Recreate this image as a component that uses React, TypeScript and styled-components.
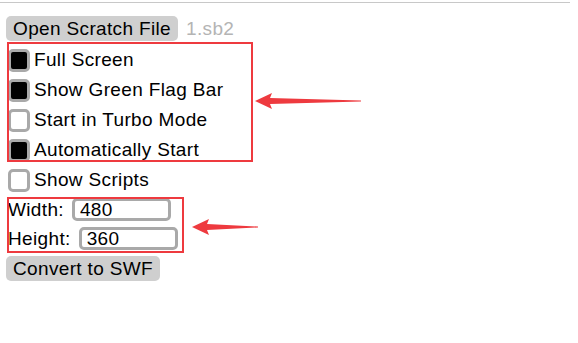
import React, { useState } from "react";
import styled, { createGlobalStyle } from "styled-components";

const GlobalStyle = createGlobalStyle`
  html, body {
    margin: 0;
    padding: 0;
    background: #fff;
  }
  body {
    font-family: "Liberation Sans", Arial, sans-serif;
    color: #000;
  }
`;

interface Option {
  id: string;
  label: string;
  checked: boolean;
}

const initialOptions: Option[] = [
  { id: "fullscreen", label: "Full Screen", checked: true },
  { id: "flagbar", label: "Show Green Flag Bar", checked: true },
  { id: "turbo", label: "Start in Turbo Mode", checked: false },
  { id: "autostart", label: "Automatically Start", checked: true },
];

const Arrow: React.FC<{ length: number }> = ({ length }) => (
  <svg width={length} height={18} viewBox={`0 0 ${length} 18`}>
    <path
      d={`M0 9 L17 1 L15 6 L${length} 8.5 L${length} 9.5 L15 12 L17 17 Z`}
      fill="#ee3a3f"
    />
  </svg>
);

export default function App() {
  const [options, setOptions] = useState(initialOptions);
  const [showScripts, setShowScripts] = useState(false);
  const [width, setWidth] = useState("480");
  const [height, setHeight] = useState("360");

  const toggle = (id: string) =>
    setOptions((prev) =>
      prev.map((o) => (o.id === id ? { ...o, checked: !o.checked } : o))
    );

  return (
    <>
      <GlobalStyle />
      <Ruler />
      <Page>
        <FileRow>
          <GrayButton>Open Scratch File</GrayButton>
          <FileName>1.sb2</FileName>
        </FileRow>

        <Annotated gap={4}>
          {options.map((o) => (
            <CheckRow key={o.id} onClick={() => toggle(o.id)}>
              <Box checked={o.checked} />
              <span>{o.label}</span>
            </CheckRow>
          ))}
          {/* red annotation frame + arrow */}
          <Frame style={{ top: -3, left: 1, width: 246, height: 120 }} />
          <ArrowHolder style={{ top: 47, left: 249 }}>
            <Arrow length={106} />
          </ArrowHolder>
        </Annotated>

        <CheckRow onClick={() => setShowScripts(!showScripts)}>
          <Box checked={showScripts} />
          <span>Show Scripts</span>
        </CheckRow>

        <Annotated gap={0}>
          <SizeRow>
            <SizeLabel>Width:</SizeLabel>
            <SizeInput
              value={width}
              onChange={(e) => setWidth(e.target.value)}
            />
          </SizeRow>
          <SizeRow>
            <SizeLabel>Height:</SizeLabel>
            <SizeInput
              value={height}
              onChange={(e) => setHeight(e.target.value)}
            />
          </SizeRow>
          <Frame style={{ top: 2, left: 1, width: 177, height: 56 }} />
          <ArrowHolder style={{ top: 23, left: 186 }}>
            <Arrow length={66} />
          </ArrowHolder>
        </Annotated>

        <ConvertButton>Convert to SWF</ConvertButton>
      </Page>
    </>
  );
}

const Ruler = styled.div`
  height: 2px;
  width: 570px;
  border-bottom: 1px solid #c8c8c8;
`;

const Page = styled.div`
  display: flex;
  flex-direction: column;
  align-items: flex-start;
  padding: 13px 0 0 6px;
  font-size: 19px;
  letter-spacing: 0.35px;
`;

const FileRow = styled.div`
  display: flex;
  align-items: center;
  gap: 8px;
`;

const GrayButton = styled.button`
  font-family: "Liberation Sans", Arial, sans-serif;
  font-size: 19px;
  letter-spacing: 0.35px;
  color: #000;
  background: #cfcfcf;
  border: none;
  border-radius: 5px;
  height: 25px;
  padding: 0 7px;
  line-height: 25px;
  cursor: pointer;
`;

const ConvertButton = styled(GrayButton)`
  margin-top: 3px;
`;

const FileName = styled.span`
  color: #b4b4b4;
`;

const Annotated = styled.div<{ gap: number }>`
  position: relative;
  display: flex;
  flex-direction: column;
  margin-top: ${(p) => p.gap}px;
`;

const Frame = styled.div`
  position: absolute;
  box-sizing: border-box;
  border: 2px solid #ee3a3f;
  pointer-events: none;
`;

const ArrowHolder = styled.div`
  position: absolute;
  line-height: 0;
  pointer-events: none;
`;

const CheckRow = styled.label`
  display: flex;
  align-items: center;
  gap: 4px;
  height: 30px;
  padding-left: 2px;
  cursor: pointer;
  user-select: none;
`;

const Box = styled.span<{ checked: boolean }>`
  box-sizing: border-box;
  width: 22px;
  height: 23px;
  border: 3px solid #a9a9a9;
  border-radius: 5px;
  background: ${(p) => (p.checked ? "#000" : "#fff")};
`;

const SizeRow = styled.div`
  display: flex;
  align-items: center;
  gap: 8px;
  height: 29px;
  padding-left: 2px;
`;

const SizeLabel = styled.span`
  font-size: 19px;
`;

const SizeInput = styled.input`
  box-sizing: border-box;
  width: 99px;
  height: 23px;
  border: 3px solid #a9a9a9;
  border-radius: 5px;
  padding: 0 5px;
  font-family: "Liberation Sans", Arial, sans-serif;
  font-size: 19px;
  letter-spacing: 0.35px;
  color: #000;
  outline: none;
`;
